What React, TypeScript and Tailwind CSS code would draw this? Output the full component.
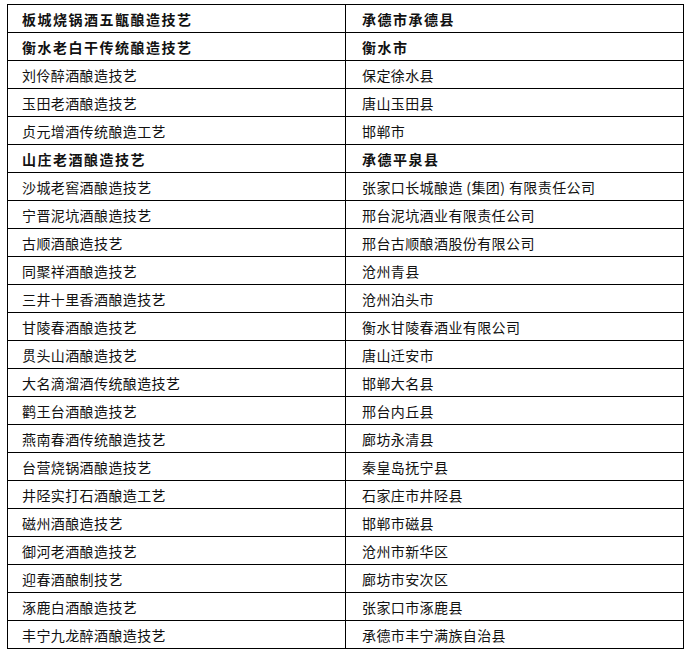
const rows: [string, string, boolean][] = [
  ['板城烧锅酒五甑酿造技艺', '承德市承德县', true],
  ['衡水老白干传统酿造技艺', '衡水市', true],
  ['刘伶醉酒酿造技艺', '保定徐水县', false],
  ['玉田老酒酿造技艺', '唐山玉田县', false],
  ['贞元增酒传统酿造工艺', '邯郸市', false],
  ['山庄老酒酿造技艺', '承德平泉县', true],
  ['沙城老窖酒酿造技艺', '张家口长城酿造 (集团) 有限责任公司', false],
  ['宁晋泥坑酒酿造技艺', '邢台泥坑酒业有限责任公司', false],
  ['古顺酒酿造技艺', '邢台古顺酿酒股份有限公司', false],
  ['同聚祥酒酿造技艺', '沧州青县', false],
  ['三井十里香酒酿造技艺', '沧州泊头市', false],
  ['甘陵春酒酿造技艺', '衡水甘陵春酒业有限公司', false],
  ['贯头山酒酿造技艺', '唐山迁安市', false],
  ['大名滴溜酒传统酿造技艺', '邯郸大名县', false],
  ['鹳王台酒酿造技艺', '邢台内丘县', false],
  ['燕南春酒传统酿造技艺', '廊坊永清县', false],
  ['台营烧锅酒酿造技艺', '秦皇岛抚宁县', false],
  ['井陉实打石酒酿造工艺', '石家庄市井陉县', false],
  ['磁州酒酿造技艺', '邯郸市磁县', false],
  ['御河老酒酿造技艺', '沧州市新华区', false],
  ['迎春酒酿制技艺', '廊坊市安次区', false],
  ['涿鹿白酒酿造技艺', '张家口市涿鹿县', false],
  ['丰宁九龙醉酒酿造技艺', '承德市丰宁满族自治县', false],
]

export default function App() {
  return (
    <div className="bg-white w-[690px] h-[655px] pt-[4px] pl-[7px]">
      <table className="border-collapse w-[677px] text-[14px] text-[#111] font-['Noto_Sans_CJK_SC','Noto_Sans',sans-serif]">
        <tbody>
          {rows.map(([name, place, bold]) => (
            <tr key={name} className="h-[28px]">
              <td className={`border border-black w-[338px] pl-[14px] p-0 leading-none ${bold ? 'font-bold tracking-[1.5px]' : 'tracking-[0.4px]'}`}>
                {name}
              </td>
              <td className={`border border-black pl-[16px] p-0 leading-none ${bold ? 'font-bold tracking-[1.5px]' : 'tracking-[0.4px]'}`}>
                {place}
              </td>
            </tr>
          ))}
        </tbody>
      </table>
    </div>
  )
}
